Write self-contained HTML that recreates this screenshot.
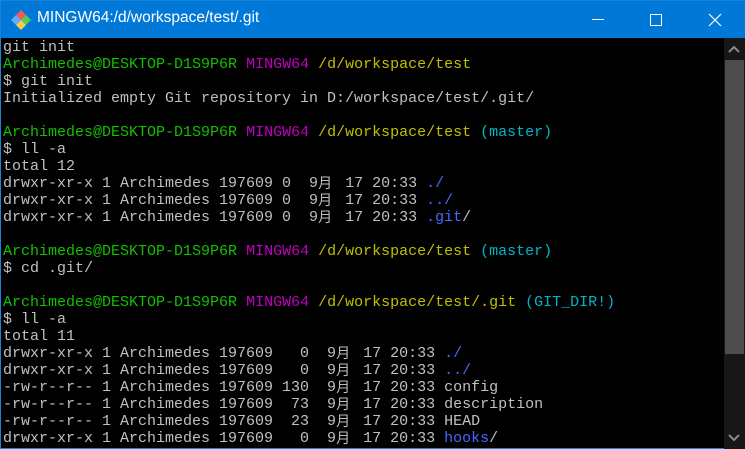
<!DOCTYPE html>
<html><head><meta charset="utf-8"><style>
html,body{margin:0;padding:0;width:745px;height:449px;overflow:hidden;background:#000}
.win{position:absolute;left:0;top:0;width:745px;height:449px;background:#000;border:1px solid #1883d7;box-sizing:border-box}
.title{position:absolute;left:0;top:0;width:745px;height:37px;background:#0078d7}
.ttext{position:absolute;left:36px;top:8px;color:#fff;font:15.5px "Liberation Sans",sans-serif}
pre{position:absolute;left:2px;top:38px;margin:0;font:15px/17px "Liberation Mono","Noto Sans CJK SC",monospace;color:#c0c0c0;white-space:pre}
.g{color:#13c000}.m{color:#c000c0}.y{color:#c0c000}.c{color:#00b4c8}.b{color:#4868ff}
.cj{display:inline-block;width:18px;font-family:"Noto Sans CJK SC",sans-serif;font-size:14px;line-height:17px;vertical-align:top}
.sb{position:absolute;left:723px;top:37px;width:21px;height:411px;background:#171717}
.th{position:absolute;left:724px;top:59px;width:19px;height:294px;background:#4d4d4d}
</style></head><body><div class="win">
<div class="title">
<svg style="position:absolute;left:9px;top:8px" width="22" height="22" viewBox="0 0 22 22">
<polygon points="11,1 16,6 11,11 6,6" fill="#f05a5a"/>
<polygon points="16,6 21,11 16,16 11,11" fill="#5ac85a"/>
<polygon points="11,11 16,16 11,21 6,16" fill="#f0d050"/>
<polygon points="6,6 11,11 6,16 1,11" fill="#6aa8f0"/>
</svg>
<div class="ttext">MINGW64:/d/workspace/test/.git</div>
<div style="position:absolute;left:591px;top:18px;width:12px;height:1px;background:#fff"></div>
<div style="position:absolute;left:649px;top:13px;width:10px;height:10px;border:1px solid #fff"></div>
<svg style="position:absolute;left:707px;top:12px" width="14" height="14"><path d="M1 1L13 13M13 1L1 13" stroke="#fff" stroke-width="1.2"/></svg>
</div>
<pre>git init
<span class="g">Archimedes@DESKTOP-D1S9P6R</span> <span class="m">MINGW64</span> <span class="y">/d/workspace/test</span>
$ git init
Initialized empty Git repository in D:/workspace/test/.git/

<span class="g">Archimedes@DESKTOP-D1S9P6R</span> <span class="m">MINGW64</span> <span class="y">/d/workspace/test</span> <span class="c">(master)</span>
$ ll -a
total 12
drwxr-xr-x 1 Archimedes 197609 0  9<span class="cj">月</span> 17 20:33 <span class="b">./</span>
drwxr-xr-x 1 Archimedes 197609 0  9<span class="cj">月</span> 17 20:33 <span class="b">../</span>
drwxr-xr-x 1 Archimedes 197609 0  9<span class="cj">月</span> 17 20:33 <span class="b">.git</span>/

<span class="g">Archimedes@DESKTOP-D1S9P6R</span> <span class="m">MINGW64</span> <span class="y">/d/workspace/test</span> <span class="c">(master)</span>
$ cd .git/

<span class="g">Archimedes@DESKTOP-D1S9P6R</span> <span class="m">MINGW64</span> <span class="y">/d/workspace/test/.git</span> <span class="c">(GIT_DIR!)</span>
$ ll -a
total 11
drwxr-xr-x 1 Archimedes 197609   0  9<span class="cj">月</span> 17 20:33 <span class="b">./</span>
drwxr-xr-x 1 Archimedes 197609   0  9<span class="cj">月</span> 17 20:33 <span class="b">../</span>
-rw-r--r-- 1 Archimedes 197609 130  9<span class="cj">月</span> 17 20:33 config
-rw-r--r-- 1 Archimedes 197609  73  9<span class="cj">月</span> 17 20:33 description
-rw-r--r-- 1 Archimedes 197609  23  9<span class="cj">月</span> 17 20:33 HEAD
drwxr-xr-x 1 Archimedes 197609   0  9<span class="cj">月</span> 17 20:33 <span class="b">hooks</span>/</pre>
<div class="sb"></div><div class="th"></div>
<svg style="position:absolute;left:727px;top:44px" width="12" height="8"><path d="M1 7L6 2L11 7" stroke="#8a8a8a" stroke-width="2" fill="none"/></svg>
<svg style="position:absolute;left:727px;top:433px" width="12" height="8"><path d="M1 1L6 6L11 1" stroke="#8a8a8a" stroke-width="2" fill="none"/></svg>
</div></body></html>
